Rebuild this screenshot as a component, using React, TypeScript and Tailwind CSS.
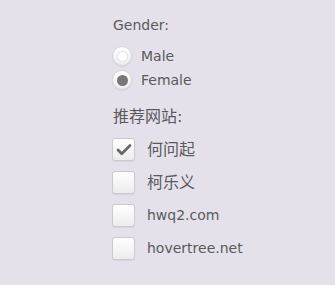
import { Check } from "lucide-react";

const SITES = [
  { label: "何问起", checked: true },
  { label: "柯乐义", checked: false },
  { label: "hwq2.com", checked: false },
  { label: "hovertree.net", checked: false },
];

function Radio({ checked }: { checked: boolean }) {
  return (
    <span className="w-5 h-5 rounded-full border border-[#d6d3da] bg-gradient-to-b from-white to-[#ececec] shadow-[0_1px_1px_rgba(0,0,0,0.08)] flex items-center justify-center">
      <span
        className={
          checked
            ? "w-[11px] h-[11px] rounded-full bg-[#777]"
            : "w-[11px] h-[11px] rounded-full border border-[#e2e2e2] bg-white"
        }
      />
    </span>
  );
}

function Box({ checked }: { checked: boolean }) {
  return (
    <span className="w-[23px] h-[23px] rounded-[3px] border border-[#cbc9cf] bg-gradient-to-b from-white to-[#ececec] shadow-[0_1px_1px_rgba(0,0,0,0.06)] flex items-center justify-center">
      {checked && <Check className="w-[18px] h-[18px] text-[#666]" strokeWidth={3.5} />}
    </span>
  );
}

export default function App() {
  return (
    <div
      className="w-[335px] h-[285px] bg-[#e4e1eb] text-[#5a5a5a] pl-[112px] pt-[16px]"
      style={{ fontFamily: '"DejaVu Sans", "Noto Sans CJK SC", sans-serif' }}
    >
      <p className="text-[14px] leading-[18px] pl-px">Gender:</p>
      <div className="mt-[12px] flex flex-col gap-[4px]">
        {["Male", "Female"].map((g) => (
          <label key={g} className="flex items-center gap-[9px] h-[20px]">
            <Radio checked={g === "Female"} />
            <span className="text-[14px]">{g}</span>
          </label>
        ))}
      </div>
      <p className="mt-[17px] text-[16px] leading-[20px] pl-px">推荐网站:</p>
      <div className="mt-[11px] flex flex-col gap-[10px]">
        {SITES.map((s) => (
          <label key={s.label} className="flex items-center gap-[12px] h-[23px]">
            <Box checked={s.checked} />
            <span className={/^[a-z]/.test(s.label) ? "text-[14px]" : "text-[16px]"}>{s.label}</span>
          </label>
        ))}
      </div>
    </div>
  );
}
